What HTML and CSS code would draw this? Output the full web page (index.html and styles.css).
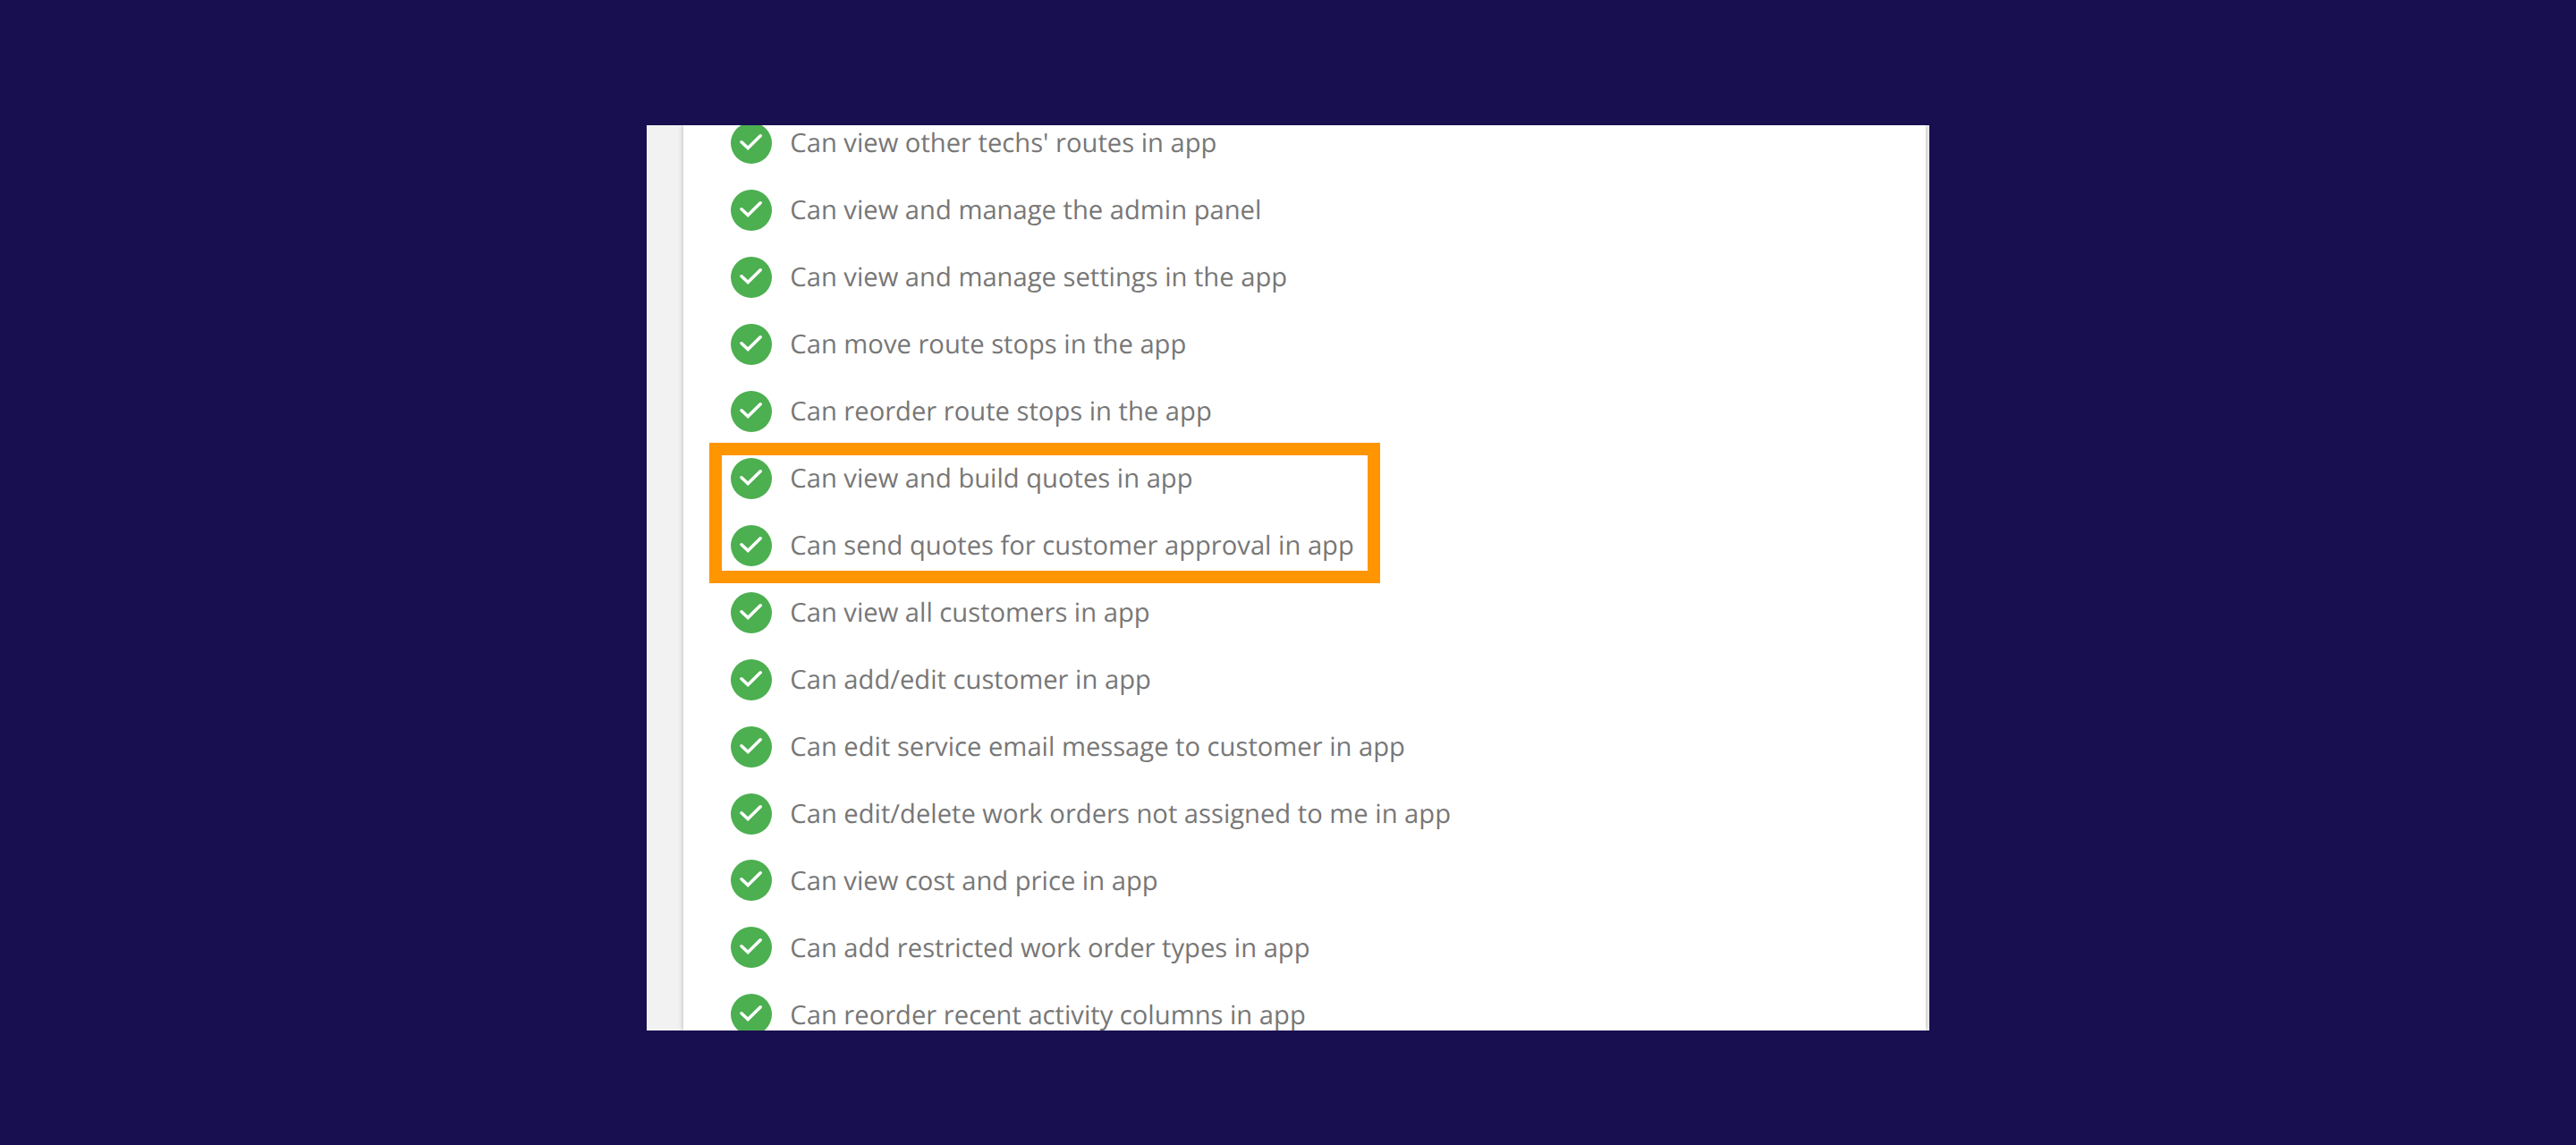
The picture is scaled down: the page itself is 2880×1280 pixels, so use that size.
FILE: index.html
```html
<!DOCTYPE html>
<html lang="en">
<head>
  <meta charset="UTF-8">
  <meta name="viewport" content="width=device-width, initial-scale=1.0">
  <title>App permissions</title>
  <link rel="stylesheet" href="styles.css">
</head>
<body>
  <svg class="sprite" xmlns="http://www.w3.org/2000/svg">
    <symbol id="check" viewBox="0 0 46 46">
      <circle cx="23" cy="23" r="23" fill="#4caf50"/>
      <path d="M12 21.8 L19.2 28.6 L33.2 14.8" fill="none" stroke="#fff" stroke-width="3.6" stroke-linecap="round"/>
    </symbol>
  </svg>

  <main class="panel">
    <section class="card">
      <ul class="permissions">
        <li><svg class="icon"><use href="#check"/></svg><span>Can view other techs' routes in app</span></li>
        <li><svg class="icon"><use href="#check"/></svg><span>Can view and manage the admin panel</span></li>
        <li><svg class="icon"><use href="#check"/></svg><span>Can view and manage settings in the app</span></li>
        <li><svg class="icon"><use href="#check"/></svg><span>Can move route stops in the app</span></li>
        <li><svg class="icon"><use href="#check"/></svg><span>Can reorder route stops in the app</span></li>
        <li><svg class="icon"><use href="#check"/></svg><span>Can view and build quotes in app</span></li>
        <li><svg class="icon"><use href="#check"/></svg><span>Can send quotes for customer approval in app</span></li>
        <li><svg class="icon"><use href="#check"/></svg><span>Can view all customers in app</span></li>
        <li><svg class="icon"><use href="#check"/></svg><span>Can add/edit customer in app</span></li>
        <li><svg class="icon"><use href="#check"/></svg><span>Can edit service email message to customer in app</span></li>
        <li><svg class="icon"><use href="#check"/></svg><span>Can edit/delete work orders not assigned to me in app</span></li>
        <li><svg class="icon"><use href="#check"/></svg><span>Can view cost and price in app</span></li>
        <li><svg class="icon"><use href="#check"/></svg><span>Can add restricted work order types in app</span></li>
        <li><svg class="icon"><use href="#check"/></svg><span>Can reorder recent activity columns in app</span></li>
      </ul>
    </section>
    <div class="highlight"></div>
  </main>
</body>
</html>
```
FILE: styles.css
```css
* {
  box-sizing: border-box;
}
body {
  margin: 0;
  height: 100vh;
  padding: 140px 723px 128px;
  background-color: #180f50;
  font-family: "Open Sans", sans-serif;
}
.sprite {
  display: none;
}
.panel {
  position: relative;
  height: 1012px;
  padding: 0 4px 0 41px;
  background-color: #f2f2f2;
  overflow: hidden;
}
.card {
  display: flex;
  height: 100%;
  background-color: #fff;
  box-shadow: 0 0 6px rgba(0, 0, 0, 0.26);
}
/* list is scrolled, the first row is cut at the top */
.permissions {
  list-style: none;
  margin: -18px 0 0;
  padding: 0 0 0 53.3px;
}
.permissions li {
  display: flex;
  align-items: center;
  gap: 20px;
  height: 74.95px;
  font-size: 29.18px;
  line-height: 40px;
  color: #777;
  white-space: nowrap;
  text-rendering: geometricPrecision;
}
.icon {
  width: 46px;
  height: 46px;
  margin-top: 1.4px;
  flex: none;
}
.highlight {
  position: absolute;
  left: 70px;
  top: 355px;
  width: 750px;
  height: 157px;
  border: 14px solid #ff9500;
}
```
